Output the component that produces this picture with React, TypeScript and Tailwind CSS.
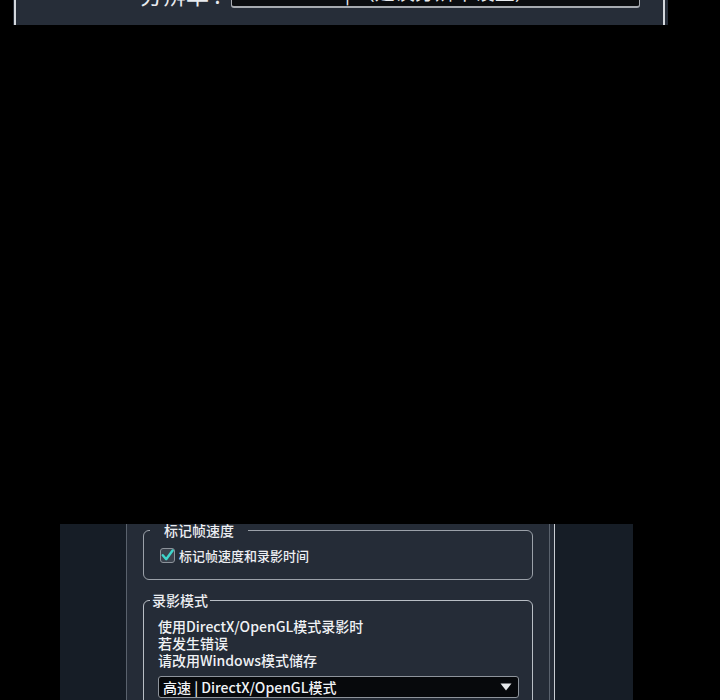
import React from "react";

export default function App() {
  const font = { fontFamily: '"Noto Sans CJK SC", "Noto Sans", sans-serif' };
  return (
    <div className="w-[720px] h-[700px] bg-black overflow-hidden flex flex-col" style={font}>
      {/* top panel */}
      <div className="ml-[13px] w-[655px] h-[25px] bg-[#262d38] flex items-start overflow-hidden shrink-0">
        <div className="ml-[1px] w-[2px] h-full bg-[#d4d8dd]" />
        <div className="ml-[124px] mt-[-19px] text-[23px] leading-[26px] text-[#e8ebef] whitespace-nowrap">
          分辨率 :
        </div>
        <div className="ml-[10px] w-[409px] h-[8px] border-x border-b-2 border-[#a7abb1] rounded-b-[3px] bg-[#0b0d10] overflow-hidden flex items-start">
          <div className="ml-[10px] mt-[-20px] text-[20px] leading-[24px] text-[#e8ebef] whitespace-nowrap">
            1920x1080 | （建议分辨率设置）
          </div>
        </div>
        <div className="ml-[23px] w-[2px] h-full bg-[#d4d8dd]" />
      </div>

      {/* bottom panel */}
      <div className="mt-[499px] ml-[60px] w-[573px] h-[176px] bg-[#161d26] flex overflow-hidden shrink-0">
        <div className="w-[66px] shrink-0" />
        <div className="w-[424px] shrink-0 border-x border-[#5a626d] bg-[#252c37] pl-[16px] pt-0">
          {/* group 1 */}
          <fieldset className="mt-[-2px] w-[390px] border border-[#9ba1a9] rounded-[6px] pl-[16px] pr-[10px] pb-[16px] pt-[10px]">
            <legend className="ml-[-10px] px-[14px] text-[14px] leading-[16px] font-medium text-[#eceef2]">标记帧速度</legend>
            <div className="flex items-center h-[15px]">
              <div className="w-[15px] h-[15px] rounded-[3px] border border-[#8d939b] bg-[#3b424d] flex items-center justify-center">
                <svg width="13" height="13" viewBox="0 0 13 13">
                  <path d="M1.8 6.2 L5.2 10.2 L11.6 1.5" fill="none" stroke="#3fd6cc" strokeWidth="2.4" strokeLinecap="round" strokeLinejoin="round" />
                </svg>
              </div>
              <span className="ml-[4px] text-[13px] leading-[16px] font-medium text-[#eceef2] whitespace-nowrap">标记帧速度和录影时间</span>
            </div>
          </fieldset>

          {/* group 2 */}
          <fieldset className="mt-[12px] w-[390px] border border-[#b9bec5] rounded-[6px] pl-[14px] pr-[12px] pt-[10px] pb-[12px]">
            <legend className="ml-[-8px] px-[2px] text-[14px] leading-[16px] font-medium text-[#eceef2]">录影模式</legend>
            <div className="text-[14px] leading-[17px] font-medium text-[#f0f2f5] whitespace-nowrap">
              <div>使用DirectX/OpenGL模式录影时</div>
              <div>若发生错误</div>
              <div>请改用Windows模式储存</div>
            </div>
            <div className="mt-[7px] w-[361px] h-[22px] bg-[#07090c] border border-[#8e949c] rounded-[3px] flex items-center pl-[4px] pr-[6px]">
              <span className="text-[14px] leading-[18px] font-medium text-[#f0f2f5] whitespace-nowrap">高速 | DirectX/OpenGL模式</span>
              <svg className="ml-auto" width="12" height="8" viewBox="0 0 12 8">
                <path d="M0.5 0.5 L11.5 0.5 L6 7.5 Z" fill="#e6e8eb" />
              </svg>
            </div>
          </fieldset>
        </div>
        <div className="w-[4px] shrink-0 bg-[#252c37]" />
        <div className="w-[1px] shrink-0 bg-[#c9cdd3]" />
      </div>
    </div>
  );
}
